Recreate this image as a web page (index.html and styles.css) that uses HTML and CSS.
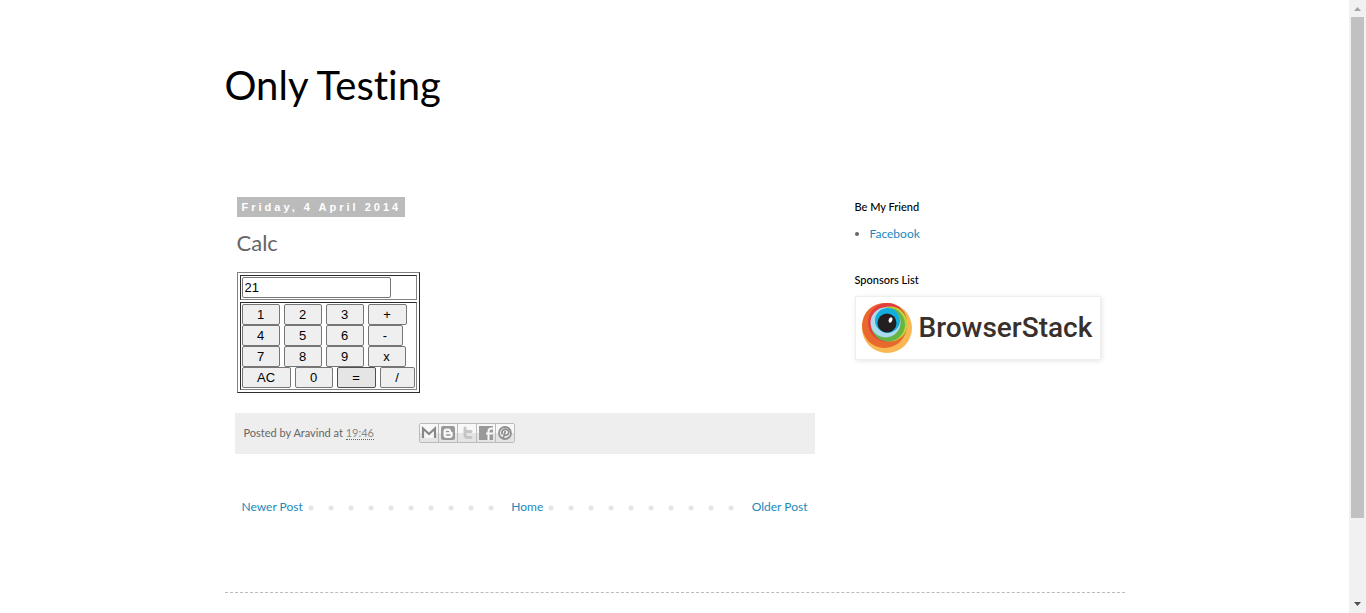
FILE: index.html
```html
<!DOCTYPE html>
<html lang="en">
<head>
<meta charset="utf-8">
<meta name="viewport" content="width=device-width, initial-scale=1">
<title>Only Testing: Calc</title>
<link rel="stylesheet" href="styles.css">
</head>
<body>
<div class="viewport">
  <div class="page">
    <header class="header"><h1 class="site-title">Only Testing</h1></header>
    <div class="columns">
      <main class="main">
        <article class="post">
          <h2 class="date"><span class="date-label">Friday, 4 April 2014</span></h2>
          <h3 class="post-title">Calc</h3>
          <table class="calc">
            <tbody>
              <tr><td><input class="display" type="text" value="21" aria-label="Result"></td></tr>
              <tr><td>
                <div class="keys">
                  <div class="key-row"><button class="key">1</button><button class="key">2</button><button class="key">3</button><button class="key key-plus">+</button></div>
                  <div class="key-row"><button class="key">4</button><button class="key">5</button><button class="key">6</button><button class="key key-narrow">-</button></div>
                  <div class="key-row"><button class="key">7</button><button class="key">8</button><button class="key">9</button><button class="key">x</button></div>
                  <div class="key-row"><button class="key key-clear">AC</button><button class="key">0</button><button class="key key-plus key-hover">=</button><button class="key key-narrow">/</button></div>
                </div>
              </td></tr>
            </tbody>
          </table>
        </article>
        <footer class="post-footer">
          <span>Posted by Aravind at <a class="time" href="#"><abbr title="19:46">19:46</abbr></a></span>
          <div class="share">
            <a class="share-link" href="#" aria-label="Email this"><svg viewBox="0 0 18 18"><path d="M2 4h14v10H2z" fill="#f8f8f8"/><path d="M3 14V4.500l6 5.500 6-5.500V14" fill="none" stroke="#888" stroke-width="2.200"/></svg></a>
            <a class="share-link" href="#" aria-label="Blog this"><svg viewBox="0 0 18 18"><rect x="2" y="2" width="14" height="14" rx="2" fill="#999"/><path d="M7.500 4.500H9.500Q12 4.500 12 7 12 8 13 8q.7 0 .7.800V11q0 3-3 3H7.500q-3 0-3-3V7.500q0-3 3-3z" fill="#f8f8f8"/><path d="M7.500 7.500h2M7.500 11h3.500" stroke="#999" stroke-width="1.400" stroke-linecap="round"/></svg></a>
            <a class="share-link" href="#" aria-label="Share to Twitter"><svg viewBox="0 0 18 18"><path d="M7 4v6.500q0 3 3 3h3M7 7.500h6" fill="none" stroke="#c5c5c5" stroke-width="3" stroke-linecap="round"/></svg></a>
            <a class="share-link" href="#" aria-label="Share to Facebook"><svg viewBox="0 0 18 18"><path d="M2 2h14v14H2z" fill="#999"/><path d="M11.500 16V7.500q0-3 3-3H16M9 9.500h7" fill="none" stroke="#f8f8f8" stroke-width="2"/></svg></a>
            <a class="share-link" href="#" aria-label="Share to Pinterest"><svg viewBox="0 0 18 18"><circle cx="9" cy="9" r="6" fill="#f4f4f4" stroke="#909090" stroke-width="1.800"/><path d="M7 15 9.300 7M6.500 10.500Q5 8 7 6.200q2-1.700 4.500-.4 2 1.500.8 4-1.700 2.400-3.600 1" fill="none" stroke="#909090" stroke-width="1.800"/></svg></a>
          </div>
        </footer>
        <nav class="pager"><a href="#">Newer Post</a><a href="#">Home</a><a href="#">Older Post</a></nav>
      </main>
      <aside class="sidebar">
        <section class="widget">
          <h2 class="widget-title">Be My Friend</h2>
          <ul class="links"><li><a href="#">Facebook</a></li></ul>
        </section>
        <section class="widget">
          <h2 class="widget-title">Sponsors List</h2>
          <a class="sponsor" href="#">
            <svg class="sponsor-mark" viewBox="0 0 50 52">
              <circle cx="25" cy="26" r="25" fill="#f9b854"/>
              <ellipse cx="22.500" cy="23.500" rx="22.500" ry="22.500" fill="#e9692c"/>
              <circle cx="25.500" cy="20.500" r="19.500" fill="#e43d41"/>
              <circle cx="28" cy="22" r="17.500" fill="#c3d335"/>
              <circle cx="26" cy="22.500" r="17" fill="#67b548"/>
              <circle cx="23.500" cy="20.500" r="15" fill="#addbed"/>
              <circle cx="25.500" cy="18.500" r="12.500" fill="#12aedb"/>
              <circle cx="25" cy="21" r="9.500" fill="#231f20"/>
              <ellipse cx="28.500" cy="18" rx="1.800" ry="2.800" transform="rotate(25 28.500 18)" fill="#fff"/>
            </svg>
            <span class="sponsor-name">BrowserStack</span>
          </a>
        </section>
      </aside>
    </div>
    <div class="page-end"></div>
  </div>
  <div class="scroll" aria-hidden="true">
    <svg class="scroll-arrow" viewBox="0 0 17 17"><path d="M5 11h7L8.500 7z" fill="#a3a3a3"/></svg>
    <div class="scroll-track"><div class="scroll-thumb"></div></div>
    <svg class="scroll-arrow" viewBox="0 0 17 17"><path d="M5 6h7l-3.500 4z" fill="#505050"/></svg>
  </div>
</div>
</body>
</html>
```
FILE: styles.css
```css
* { box-sizing: border-box; }
body {
  margin: 0;
  background: #fff;
  color: #666;
  font: 12px/16px "Trebuchet MS", Lato, sans-serif;
  font-variant-ligatures: none;
}
h1, h2, h3, ul { margin: 0; padding: 0; font-weight: normal; }
a { color: #2288bb; text-decoration: none; }
.viewport { display: flex; height: 100vh; overflow: hidden; }
.page { flex: 1; max-width: 900px; margin: 0 auto; }
.header { padding: 60px 0 87px; }
.site-title { color: #000; font-size: 40px; line-height: 50px; }
.columns { display: flex; gap: 40px; padding: 0 10px; }
.main { flex: 1; min-width: 0; }
.post { padding: 0 2px; }
.date { line-height: 20px; display: flex; }
.date-label {
  padding: 0 4px 0 5px;
  background: #bbb;
  color: #fff;
  font: bold 11px/20px Arial, "Liberation Sans", sans-serif;
  letter-spacing: 3px;
}
.post-title { margin: 12px 0 15px; font-size: 22px; line-height: 28px; }
.calc {
  width: 183px;
  border: 1px outset gray;
  border-spacing: 2px;
}
.calc td { padding: 1px; border: 1px inset gray; }
.display, .key {
  display: block;
  height: 21px;
  border: 1px solid #767676;
  border-radius: 2px;
  color: #000;
  font: 13px/17px Arial, "Liberation Sans", sans-serif;
}
.display { width: 149px; padding: 1px 2px; }
.key-row { display: flex; gap: 4px; }
.key { width: 38px; padding: 0; background: #efefef; text-align: center; }
.key-plus { width: 39px; }
.key-narrow { width: 35px; }
.key-clear { width: 49px; }
.key-hover { background: #e5e5e5; border-color: #4f4f4f; }
.post-footer {
  display: flex;
  align-items: center;
  gap: 45px;
  height: 41px;
  margin-top: 20px;
  padding: 0 9px 2px;
  background: #eee;
  font-size: 11px;
}
.time { color: #888; }
.time abbr { text-decoration: none; border-bottom: 1px dotted #666; }
.share { display: flex; border: 1px solid #bbb; border-radius: 2px; }
.share-link { height: 18px; background: linear-gradient(#f8f8f8 50%, #e4e4e4 50%); }
.share-link + .share-link { border-left: 1px solid #bbb; }
.share-link svg { display: block; width: 18px; height: 18px; }
.pager {
  display: flex;
  justify-content: space-between;
  margin: 40px 0 30px;
  padding: 5px 0 5px 2px;
  background: radial-gradient(circle at 16px 10px, #e4e4e4 2px, transparent 3px) 0 4px / 20px 20px repeat-x;
}
.pager a { padding: 0 5px; background: #fff; }
.pager a:last-child { padding-right: 7px; }
.sidebar { flex: 0 0 260px; padding-top: 2px; }
.widget { margin-bottom: 30px; }
.widget-title { color: #000; font-size: 11px; line-height: 16px; font-weight: 500; }
.links { margin-top: 11px; padding-left: 15px; }
.widget + .widget .widget-title { margin-bottom: 8px; }
.sponsor {
  display: flex;
  align-items: center;
  gap: 7px;
  width: 246px;
  height: 64px;
  padding: 0 6px;
  border: 1px solid #eee;
  box-shadow: 1px 1px 5px rgba(0, 0, 0, .1);
}
.sponsor-mark { width: 50px; height: 52px; flex: none; }
.sponsor-name { color: #39302b; font: 500 28px/32px Roboto, sans-serif; }
.page-end { margin-top: 42px; border-top: 1px dashed #bbb; }
.scroll { display: flex; flex-direction: column; width: 17px; background: #f1f1f1; }
.scroll-arrow { width: 17px; height: 17px; flex: none; }
.scroll-track { flex: 1; padding: 0 2px; }
.scroll-thumb { height: 86.5%; background: #c1c1c1; }
```
